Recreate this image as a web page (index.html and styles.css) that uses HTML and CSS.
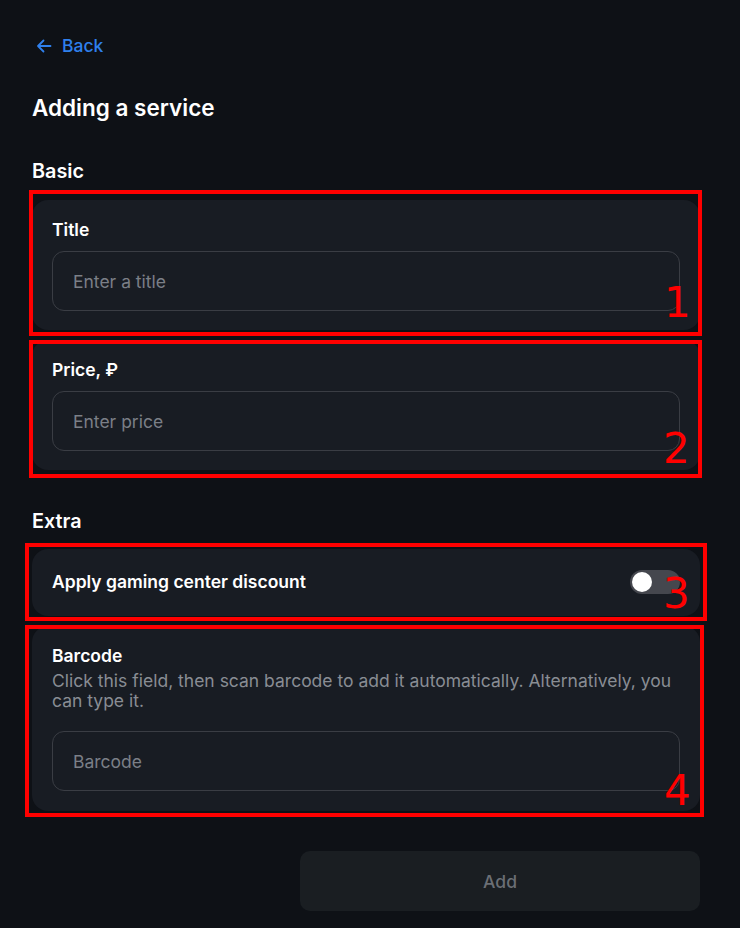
FILE: index.html
```html
<!DOCTYPE html>
<html lang="en">
<head>
<meta charset="utf-8">
<title>Adding a service</title>
<link rel="stylesheet" href="styles.css">
</head>
<body>
<main class="page">
  <a class="back" href="#">
    <svg class="back-icon" viewBox="0 0 16 16" width="16" height="16" fill="none" stroke="currentColor" stroke-width="1.8" stroke-linecap="round" stroke-linejoin="round"><path d="M14.5 8H2M7.5 2.5 2 8l5.5 5.5"/></svg>
    <span>Back</span>
  </a>
  <h1 class="title">Adding a service</h1>

  <h2 class="section">Basic</h2>
  <div class="card field">
    <label class="label">Title</label>
    <div class="input">Enter a title</div>
  </div>
  <div class="card field">
    <label class="label">Price, ₽</label>
    <div class="input">Enter price</div>
  </div>

  <h2 class="section extra">Extra</h2>
  <div class="card toggle-card">
    <span class="label">Apply gaming center discount</span>
    <span class="switch"><span class="knob"></span></span>
  </div>
  <div class="card field barcode">
    <label class="label">Barcode</label>
    <p class="hint">Click this field, then scan barcode to add it automatically. Alternatively, you can type it.</p>
    <div class="input">Barcode</div>
  </div>

  <div class="actions">
    <button class="add-btn" type="button">Add</button>
  </div>
</main>

<div class="mark mark-1"></div>
<div class="mark mark-2"></div>
<div class="mark mark-3"></div>
<div class="mark mark-4"></div>
<span class="num num-1">1</span>
<span class="num num-2">2</span>
<span class="num num-3">3</span>
<span class="num num-4">4</span>
</body>
</html>
```

FILE: styles.css
```css
* { box-sizing: border-box; }
html, body { margin: 0; padding: 0; }
body {
  background: #0e1116;
  font-family: Inter, "Noto Sans", "Liberation Sans", sans-serif;
  color: #f4f5f7;
  position: relative;
  min-height: 928px;
}
.page {
  padding: 36px 40px 0 32px;
  display: flex;
  flex-direction: column;
}
.back {
  display: flex;
  align-items: center;
  gap: 10px;
  color: #2f80ed;
  text-decoration: none;
  font-size: 17.5px;
  font-weight: 500;
  line-height: 20px;
  padding-left: 4px;
}
.back-icon { display: block; }
.title {
  margin: 38px 0 0;
  font-size: 22.5px;
  line-height: 28px;
  font-weight: 600;
  color: #ffffff;
}
.section {
  margin: 37px 0 17px;
  font-size: 19.8px;
  line-height: 24px;
  font-weight: 600;
  color: #ffffff;
}
.section.extra { margin: 39px 0 16px; }
.card {
  background: #181c23;
  border-radius: 16px;
  padding: 20px 20px 19px;
}
.card + .card { margin-top: 10px; }
.field { display: flex; flex-direction: column; }
.label {
  font-size: 17.5px;
  line-height: 20px;
  font-weight: 600;
  color: #ffffff;
}
.input {
  margin-top: 11px;
  height: 60px;
  border: 1px solid #3a3d44;
  border-radius: 12px;
  padding: 0 20px;
  display: flex;
  align-items: center;
  font-size: 17.5px;
  color: #7b7f87;
}
.hint {
  margin: 5px 0 0;
  font-size: 17.5px;
  line-height: 20px;
  color: #898d94;
}
.barcode { padding-bottom: 20px; }
.barcode .input { margin-top: 20px; }
.toggle-card {
  display: flex;
  align-items: center;
  justify-content: space-between;
  padding: 21px 20px 22px;
}
.switch {
  width: 50px;
  height: 24px;
  border-radius: 12px;
  background: #45474e;
  display: flex;
  align-items: center;
  padding: 0 2px;
}
.knob {
  width: 20px;
  height: 20px;
  border-radius: 50%;
  background: #ffffff;
}
.actions {
  display: flex;
  justify-content: flex-end;
  margin-top: 40px;
}
.add-btn {
  width: 400px;
  height: 60px;
  border: none;
  border-radius: 10px;
  background: #1a1e22;
  color: #6b6f75;
  font-family: inherit;
  font-size: 17.5px;
  font-weight: 500;
}

/* annotation overlays */
.mark {
  position: absolute;
  border: 4px solid #ff0000;
  pointer-events: none;
}
.mark-1 { left: 29px; top: 190px; width: 673px; height: 146px; }
.mark-2 { left: 29px; top: 340px; width: 673px; height: 138px; }
.mark-3 { left: 25px; top: 543px; width: 682px; height: 78px; }
.mark-4 { left: 25px; top: 625px; width: 679px; height: 192px; }
.num {
  position: absolute;
  font-family: "DejaVu Sans", sans-serif;
  font-size: 42px;
  line-height: 1;
  color: #ff0000;
}
.num-1 { left: 664px; top: 282px; }
.num-2 { left: 663px; top: 428px; }
.num-3 { left: 663px; top: 573px; }
.num-4 { left: 664px; top: 770px; }
```
